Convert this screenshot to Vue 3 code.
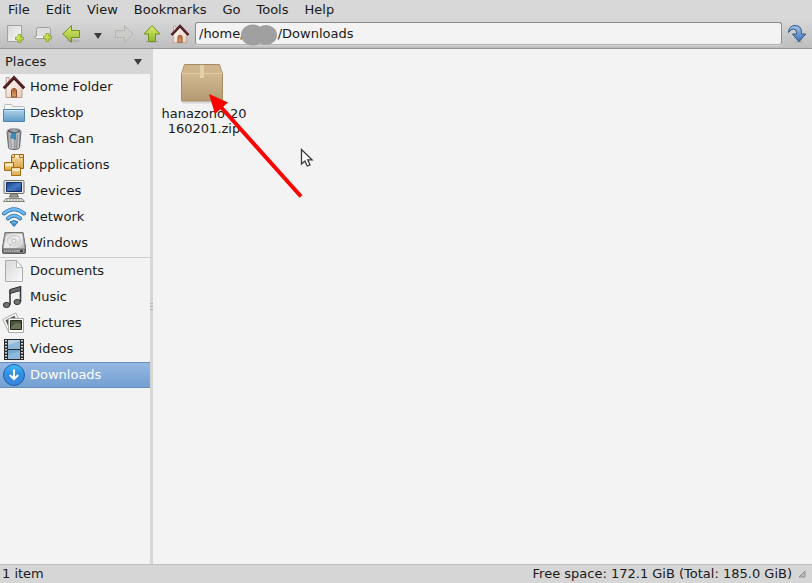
<template>
  <svg class="sprite" aria-hidden="true">
    <defs>
      <linearGradient id="green" x1="0" y1="0" x2="0" y2="1">
        <stop offset="0" stop-color="#dcec6c" /><stop offset="1" stop-color="#94b832" />
      </linearGradient>
      <linearGradient id="paper" x1="0" y1="0" x2="1" y2="1">
        <stop offset="0" stop-color="#d8d8d8" /><stop offset="1" stop-color="#fafafa" />
      </linearGradient>
      <linearGradient id="folder" x1="0" y1="0" x2="0" y2="1">
        <stop offset="0" stop-color="#aed3ea" /><stop offset="1" stop-color="#629dc8" />
      </linearGradient>
      <linearGradient id="steel" x1="0" y1="0" x2="1" y2="0">
        <stop offset="0" stop-color="#777a7f" /><stop offset=".3" stop-color="#e0e2e5" />
        <stop offset=".55" stop-color="#9c9fa4" /><stop offset=".8" stop-color="#c8cacd" /><stop offset="1" stop-color="#6d7075" />
      </linearGradient>
      <linearGradient id="gold" x1="0" y1="0" x2="0" y2="1">
        <stop offset="0" stop-color="#f5dfa8" /><stop offset="1" stop-color="#dba545" />
      </linearGradient>
      <linearGradient id="screen" x1="0" y1="0" x2="1" y2="1">
        <stop offset="0" stop-color="#173f84" /><stop offset=".5" stop-color="#4478c4" /><stop offset="1" stop-color="#1f4c96" />
      </linearGradient>
      <linearGradient id="wave" x1="0" y1="0" x2="0" y2="1">
        <stop offset="0" stop-color="#7cc2ee" /><stop offset="1" stop-color="#2877c0" />
      </linearGradient>
      <linearGradient id="disk" x1="0" y1="0" x2="1" y2="1">
        <stop offset="0" stop-color="#c2c2c2" /><stop offset=".5" stop-color="#ededed" /><stop offset="1" stop-color="#b5b5b5" />
      </linearGradient>
      <linearGradient id="wall" x1="0" y1="0" x2="1" y2="1">
        <stop offset="0" stop-color="#fff8f2" /><stop offset="1" stop-color="#e6cdbd" />
      </linearGradient>
      <linearGradient id="door" x1="0" y1="0" x2="0" y2="1">
        <stop offset="0" stop-color="#b36230" /><stop offset="1" stop-color="#e2a273" />
      </linearGradient>
      <linearGradient id="orb" x1="0" y1="0" x2="0" y2="1">
        <stop offset="0" stop-color="#45bdf5" /><stop offset=".45" stop-color="#2f8fe4" /><stop offset="1" stop-color="#3b84dc" />
      </linearGradient>
      <linearGradient id="blue" x1="0" y1="0" x2="0" y2="1">
        <stop offset="0" stop-color="#a5c5e8" /><stop offset="1" stop-color="#3a70b5" />
      </linearGradient>
      <linearGradient id="carton" x1="0" y1="0" x2="0" y2="1">
        <stop offset="0" stop-color="#dcc39b" /><stop offset="1" stop-color="#b39a72" />
      </linearGradient>
    </defs>

    <symbol id="home" viewBox="0 0 24 24">
      <path d="M4 12v10.5h16V12L12 4z" fill="url(#wall)" stroke="#bb9c8b" />
      <path d="M4.2 2.5h3V7l-3 3z" fill="#f7ece6" stroke="#aa8c80" stroke-width=".8" />
      <path d="M9.5 22v-6q0-2.5 2.5-2.5t2.5 2.5v6z" fill="url(#door)" stroke="#8b4a26" />
      <path d="M1.8 13.2 12 2.6l10.2 10.6" fill="none" stroke="#3f1417" stroke-width="3" />
      <path d="M2.5 12 12 2.3 21.5 12" fill="none" stroke="#7d3437" stroke-width="1" />
    </symbol>
    <symbol id="desktop" viewBox="0 0 24 24">
      <path d="M2.5 12V4.500q0-1 1-1h6l1 2h11q1 0 1 1V12z" fill="#f3f5f6" stroke="#b6bcc0" />
      <path d="M1.500 8.500h21v12h-21z" fill="url(#folder)" stroke="#4e84ad" />
      <path d="M2.500 9.500h19" stroke="#cde5f4" />
    </symbol>
    <symbol id="trash" viewBox="0 0 24 24">
      <path d="M5 4.500 6.500 20.500q0 2 5.500 2t5.500-2L19 4.500z" fill="url(#steel)" stroke="#63666a" />
      <path d="M8.500 8 9.300 21M15.500 8l-.8 13" stroke="#85888d" />
      <ellipse cx="12" cy="4" rx="7" ry="2.500" fill="#55585c" stroke="#a9acb0" />
      <path d="M7 3.500q5-3 10 0l-4 2z" fill="#a4a7ab" />
      <path d="M9.500 6.500 13.500 5.500v7l-2-1.500-2 .5z" fill="#3d8dbd" stroke="#246a97" stroke-width=".6" />
    </symbol>
    <symbol id="apps" viewBox="0 0 24 24">
      <path d="M9.500 2.500 11 1.500h10.500v14H9.500z" fill="url(#gold)" stroke="#986012" />
      <path d="M9.500 4.500h3v-3h5v3h4" fill="#fff0c9" stroke="#b27a26" />
      <path d="M2.500 9.500h9v8h-9z" fill="url(#gold)" stroke="#a76b16" />
      <path d="M3.500 12h7" stroke="#fbeec8" stroke-width="2" />
      <path d="M9.500 14.500h9v8h-9z" fill="url(#gold)" stroke="#a76b16" />
      <path d="M10.500 17h7" stroke="#fbeec8" stroke-width="2" />
    </symbol>
    <symbol id="devices" viewBox="0 0 24 24">
      <path d="M3 1.500h18q1 0 1 1v11q0 1-1 1H3q-1 0-1-1v-11q0-1 1-1z" fill="#e8e8e1" stroke="#72736e" />
      <path d="M4.500 3.500h15v9h-15z" fill="url(#screen)" stroke="#122f66" />
      <path d="M9 15h6l1.500 3h-9z" fill="#a8a9a3" stroke="#5e5f5a" />
      <path d="M4 19.500h16l2.500 3h-21z" fill="#ecece7" stroke="#82837d" />
      <path d="M4 21h16" stroke="#8e8f89" stroke-dasharray="2 1" />
    </symbol>
    <symbol id="network" viewBox="0 0 24 24">
      <g fill="none" stroke="#2a75b5" stroke-linecap="round">
        <path d="M2 8.500q10-8.500 20 0" stroke-width="4" />
        <path d="M5.800 13.500q6.200-5.500 12.400 0" stroke-width="3.800" />
      </g>
      <g fill="none" stroke="#73baf0" stroke-linecap="round">
        <path d="M2 8.300q10-8.300 20 0" stroke-width="2.400" />
        <path d="M5.800 13.300q6.200-5.300 12.400 0" stroke-width="2.200" />
      </g>
      <path d="M8 17q4-3 8 0l-4 4.500z" fill="url(#wave)" stroke="#236da9" stroke-linejoin="round" />
    </symbol>
    <symbol id="drive" viewBox="0 0 24 24">
      <path d="M3 1.500h18l2.500 15v5q0 1-1 1H1.500q-1 0-1-1v-5z" fill="#555" stroke="#5d5d5d" />
      <path d="M3.300 2h17.400L23 17.500H1z" fill="url(#disk)" stroke="#929292" />
      <ellipse cx="12" cy="9.500" rx="8" ry="6.500" fill="none" stroke="#fafafa" />
      <ellipse cx="12" cy="9.500" rx="7" ry="5.500" fill="none" stroke="#c9c9c9" />
      <circle cx="12" cy="10" r="2" fill="#f5f5f5" stroke="#bbb" />
      <path d="m7 15 3-3" stroke="#bbb" />
      <path d="M1.500 18.500h21v3h-21z" fill="#a5a5a5" />
      <path d="M3 20h9" stroke="#777" stroke-dasharray="1 1" />
      <path d="M18 20h3" stroke="#444" stroke-width="2" />
    </symbol>
    <symbol id="document" viewBox="0 0 24 24">
      <path d="M3.500 1.500h11l6 7v14h-17z" fill="url(#paper)" stroke="#ababab" />
      <path d="M14.500 1.500v7h6z" fill="#fff" stroke="#b7b7b7" stroke-linejoin="round" />
    </symbol>
    <symbol id="music" viewBox="0 0 24 24">
      <path d="M8 20V5.500L18.500 2v15" fill="none" stroke="#393b3d" stroke-width="1.600" />
      <path d="M8 4.500 18.500 1.500v4L8 8.500z" fill="#6a6d6f" stroke="#303234" />
      <ellipse cx="4.500" cy="20" rx="3.200" ry="2.600" fill="#737677" stroke="#303234" />
      <ellipse cx="15.200" cy="17" rx="3.200" ry="2.600" fill="#737677" stroke="#303234" />
    </symbol>
    <symbol id="pictures" viewBox="0 0 24 24">
      <path d="m.8 8.500 13-6.500 6 12-13 7z" fill="#f8f8f8" stroke="#aaa" />
      <path d="m3.500 9.200 9-4.500 4 9-9 4.500z" fill="#555b49" />
      <path d="M6.500 7.500h15v14h-15z" fill="#fff" stroke="#aaa" />
      <path d="M8.500 9.500h11v9h-11z" fill="#4c5440" stroke="#202619" />
      <path d="m9 16 5-4 5 1v5H9z" fill="#6c735c" />
    </symbol>
    <symbol id="videos" viewBox="0 0 24 24">
      <path d="M2 2h20v21H2z" fill="#292b2d" />
      <path d="M6 3h12v9H6z" fill="#b6d1e6" />
      <path d="M6 13h12v9H6z" fill="#77a9cf" />
      <path d="M6 12V8l12-4v8zm0 10v-4l12-4v8z" fill="#8fb9da" />
      <path d="M4 3v19M20 3v19" stroke="#d4d6d8" stroke-width="2" stroke-dasharray="1.500 1.500" />
    </symbol>
    <symbol id="downloads" viewBox="0 0 24 24">
      <circle cx="12" cy="12" r="10.500" fill="url(#orb)" stroke="#225fa8" />
      <path d="M12 6.500v9M7.800 12l4.200 4.200 4.200-4.200" fill="none" stroke="#fff" stroke-width="2" />
    </symbol>

    <symbol id="plus" viewBox="0 0 10 10">
      <path d="M3.500.5h3v3h3v3h-3v3h-3v-3h-3v-3h3z" fill="#bfd948" stroke="#84a62c" />
      <path d="M4.500 1.500v3h-3" fill="none" stroke="#dcec7e" />
    </symbol>
    <symbol id="new-window" viewBox="0 0 20 20">
      <path d="M1.500 1.500h14v16h-14z" fill="url(#paper)" stroke="#a2a2a2" />
      <use href="#plus" x="9" y="10" width="9" height="9" />
    </symbol>
    <symbol id="new-tab" viewBox="0 0 20 20">
      <path d="M2.500 12.500V5.500q0-2 2-2h10q2 0 2 2v9h-13Q1 14.500.5 12.500z" fill="#dedede" stroke="#9d9d9d" />
      <path d="M1.500 12.500h14v1.500h-12q-1.500 0-2-1.500z" fill="#fafafa" />
      <use href="#plus" x="9" y="9" width="9" height="9" />
    </symbol>
    <symbol id="back" viewBox="0 0 20 20">
      <ellipse cx="11" cy="17" rx="7" ry="1.500" fill="#b2b2b2" />
      <path d="M.8 10 9.500 1.500v5h8v7h-8v5z" fill="url(#green)" stroke="#6e931f" stroke-linejoin="round" />
    </symbol>
    <symbol id="forward" viewBox="0 0 20 20">
      <path d="m19.200 10-8.700-8.500v5h-9v7h9v5z" fill="#cbccc8" stroke="#b4b5b0" stroke-linejoin="round" />
    </symbol>
    <symbol id="up" viewBox="0 0 20 20">
      <ellipse cx="10" cy="17.500" rx="7" ry="1.500" fill="#b2b2b2" />
      <path d="m10 1.500 8 8.500h-4.500v7.500h-7V10H2z" fill="url(#green)" stroke="#6e931f" stroke-linejoin="round" />
    </symbol>
    <symbol id="jump" viewBox="0 0 20 20">
      <ellipse cx="12" cy="18" rx="5" ry="1" fill="#b2b2b2" />
      <path d="M1.500 8.500Q2 1.500 8 1.500q6.500 0 6.500 7V10h4.200L12 17.800 5.500 10h4V8.500Q9.500 5 6.500 5 3.500 5 1.500 8.500z" fill="url(#blue)" stroke="#2d568f" stroke-linejoin="round" />
    </symbol>
    <symbol id="package" viewBox="2 0 48 48">
      <path d="M4 43.500h40v2H4z" fill="#d8d8d8" />
      <path d="M6.500 6.500h35l3 9.500v27h-41V16z" fill="url(#carton)" stroke="#a98d62" stroke-linejoin="round" />
      <path d="M7 7h34l3 8H4z" fill="#ceb58d" />
      <path d="M4 15.500h40" stroke="#e4cda6" />
      <path d="M22 7h4v13h-4z" fill="#e3d0ae" />
    </symbol>
  </svg>

  <div class="window">
    <nav class="menubar">
      <button v-for="m in menus" :key="m" type="button">{{ m }}</button>
    </nav>

    <div class="toolbar">
      <button v-for="t in tools" :key="t.icon" type="button" :class="{ narrow: t.icon === 'history' }" :aria-label="t.label" :disabled="t.icon === 'forward'">
        <span v-if="t.icon === 'history'" class="caret"></span>
        <svg v-else><use :href="'#' + t.icon" /></svg>
      </button>
      <div class="location">
        <input v-model="path" type="text" aria-label="Location" spellcheck="false">
        <svg class="smudge" viewBox="0 0 36 22" aria-hidden="true">
          <ellipse cx="12" cy="11" rx="12" ry="10.500" />
          <ellipse cx="25" cy="11" rx="11" ry="10" />
        </svg>
      </div>
      <button type="button" class="go" aria-label="Jump to">
        <svg><use href="#jump" /></svg>
      </button>
    </div>

    <main class="panes">
      <aside class="sidebar">
        <button type="button" class="side-title">Places<span class="caret"></span></button>
        <ul v-for="(group, i) in places" :key="i">
          <li v-for="p in group" :key="p.name">
            <a href="#" :class="{ active: p.name === current }" @click.prevent="current = p.name">
              <svg><use :href="'#' + p.icon" /></svg>
              <span class="label">{{ p.name }}</span>
            </a>
          </li>
        </ul>
      </aside>
      <div class="splitter"><i></i><i></i><i></i></div>
      <section class="files">
        <a class="file" href="#" @click.prevent>
          <svg><use href="#package" /></svg>
          <span>hanazono-20<br>160201.zip</span>
        </a>
        <svg class="arrow" viewBox="0 0 94 106" aria-hidden="true">
          <path d="M11 13 92 103.500" stroke="#f00" stroke-width="4" />
          <path d="M0 1 19 9.500 6 21z" fill="#f00" />
        </svg>
        <svg class="pointer" viewBox="0 0 14 20" aria-hidden="true">
          <path d="M1.500 1.500v14.500l3.400-3 2.300 5 2.800-1.200-2.300-5h4.300z" fill="#fff" stroke="#35383b" stroke-width="1.300" />
        </svg>
      </section>
    </main>

    <footer class="status">
      <span class="label">1 item</span>
      <span class="label space">Free space: 172.1 GiB (Total: 185.0 GiB)</span>
      <svg viewBox="0 0 8 8" aria-hidden="true"><path d="M7 1v6H1z" fill="#bbb" stroke="#909090" /></svg>
    </footer>
  </div>
</template>

<script setup>
import { ref } from 'vue';

const menus = ['File', 'Edit', 'View', 'Bookmarks', 'Go', 'Tools', 'Help'];
const tools = [
  { icon: 'new-window', label: 'New window' },
  { icon: 'new-tab', label: 'New tab' },
  { icon: 'back', label: 'Back' },
  { icon: 'history', label: 'History' },
  { icon: 'forward', label: 'Forward' },
  { icon: 'up', label: 'Up' },
  { icon: 'home', label: 'Home' },
];
const places = [
  [
    { name: 'Home Folder', icon: 'home' },
    { name: 'Desktop', icon: 'desktop' },
    { name: 'Trash Can', icon: 'trash' },
    { name: 'Applications', icon: 'apps' },
    { name: 'Devices', icon: 'devices' },
    { name: 'Network', icon: 'network' },
    { name: 'Windows', icon: 'drive' },
  ],
  [
    { name: 'Documents', icon: 'document' },
    { name: 'Music', icon: 'music' },
    { name: 'Pictures', icon: 'pictures' },
    { name: 'Videos', icon: 'videos' },
    { name: 'Downloads', icon: 'downloads' },
  ],
];
const current = ref('Downloads');
// the user name is left blank under the smudge
const path = ref('/home/' + ' '.repeat(8) + '/Downloads');
</script>

<style>
body { margin: 0; }
</style>

<style scoped>
.sprite { position: absolute; width: 0; height: 0; }
.window {
  display: flex;
  flex-direction: column;
  min-height: 100vh;
  background: #f3f3f3;
  color: #1a1a1a;
  font: 13px/15px "DejaVu Sans", Verdana, sans-serif;
}
button {
  border: 0;
  margin: 0;
  padding: 0;
  background: none;
  color: inherit;
  font: inherit;
}
.menubar { display: flex; background: #d8d8d8; }
.menubar button { padding: 2px 8px; }
.toolbar {
  display: flex;
  align-items: center;
  height: 29px;
  padding-left: 2px;
  background: linear-gradient(#d8d8d8, #bebebe);
  border-bottom: 1px solid #979797;
}
.toolbar button {
  display: flex;
  align-items: center;
  justify-content: center;
  flex: none;
  width: 28px;
  height: 28px;
}
.toolbar button.narrow { width: 24px; }
.toolbar svg { width: 20px; height: 20px; }
.caret {
  border: 4px solid transparent;
  border-top: 6px solid #3c3c3c;
  border-bottom: 0;
}
.toolbar .caret { margin-top: 4px; }
.location { position: relative; flex: 1; margin-left: 1px; }
.location input {
  display: block;
  box-sizing: border-box;
  width: 100%;
  height: 23px;
  padding: 0 3px;
  border: 1px solid #8c8c8c;
  border-bottom-color: #b0b0b0;
  border-radius: 3px;
  outline: none;
  background: #f3f3f3;
  box-shadow: 0 1px 0 #d8d8d8;
  color: inherit;
  font: inherit;
}
.toolbar .smudge { position: absolute; left: 46px; top: 2px; width: 36px; height: 22px; fill: #a0a0a0; }
.toolbar button.go { width: 30px; }

.panes { display: flex; flex: 1; }
.sidebar { width: 150px; flex: none; }
.side-title {
  display: flex;
  align-items: center;
  justify-content: space-between;
  width: 100%;
  height: 25px;
  padding: 0 8px 0 5px;
  background: #d6d6d6;
}
.sidebar ul { list-style: none; margin: 0; padding: 0; }
.sidebar ul + ul { margin-top: 1px; border-top: 1px solid #cfcfcf; }
.sidebar a {
  display: flex;
  align-items: center;
  gap: 4px;
  box-sizing: border-box;
  height: 26px;
  padding-left: 2px;
  color: inherit;
  text-decoration: none;
}
.sidebar a svg { width: 24px; height: 24px; }
.label { padding-bottom: 2px; }
.sidebar a.active {
  background: linear-gradient(#97b9e3, #729fd2);
  box-shadow: inset 0 1px #638fc0, inset 0 -1px #6590c0;
  color: #fff;
}
.splitter {
  display: flex;
  flex-direction: column;
  align-items: center;
  justify-content: center;
  gap: 2px;
  width: 3px;
  background: #d6d6d6;
}
.splitter i { width: 3px; height: 1px; background: #b4b4b4; }
.files { position: relative; flex: 1; padding: 9px 6px; }
.file {
  display: inline-flex;
  flex-direction: column;
  align-items: center;
  width: 90px;
  color: inherit;
  text-align: center;
  text-decoration: none;
}
.file svg { width: 48px; height: 48px; }
.arrow { position: absolute; left: 56px; top: 44px; width: 94px; height: 106px; }
.pointer { position: absolute; left: 147px; top: 99px; width: 14px; height: 20px; }

.status {
  display: flex;
  align-items: center;
  height: 18px;
  padding: 0 6px 0 2px;
  background: #d6d6d6;
  border-top: 1px solid #c0c0c0;
}
.status .space { margin-left: auto; margin-right: 6px; }
.status svg { width: 8px; height: 8px; }
</style>
